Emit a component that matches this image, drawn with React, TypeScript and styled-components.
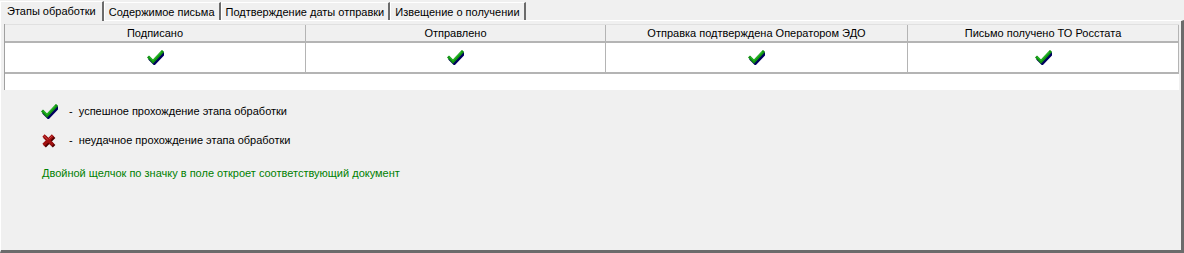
import React from "react";
import styled, { createGlobalStyle } from "styled-components";

const GlobalStyle = createGlobalStyle`
  html, body { margin: 0; padding: 0; background: #f0f0f0; }
  body { font-family: "Liberation Sans", Arial, sans-serif; font-size: 11px; color: #000; }
  * { box-sizing: border-box; }
`;

const Window = styled.div`
  width: 1184px;
  height: 253px;
  display: flex;
  flex-direction: column;
  background: #f0f0f0;
`;

const TabStrip = styled.div`
  display: flex;
  align-items: flex-end;
  height: 20px;
`;

const Tab = styled.div<{ $active?: boolean }>`
  height: ${(p) => (p.$active ? "20px" : "18px")};
  padding: ${(p) => (p.$active ? "2px 6px 0 6px" : "2px 4px 0 4px")};
  border-left: 1px solid #ffffff;
  border-top: 1px solid #ffffff;
  border-right: 2px solid #6b6b6b;
  background: #f0f0f0;
  white-space: nowrap;
  line-height: 14px;
  position: relative;
  z-index: ${(p) => (p.$active ? 2 : 1)};
  margin-bottom: ${(p) => (p.$active ? "-1px" : "0")};
`;

const Panel = styled.div`
  flex: 1;
  border-top: 1px solid #ffffff;
  border-left: 1px solid #ffffff;
  border-right: 3px solid #6b6b6b;
  border-bottom: 3px solid #6b6b6b;
  padding: 3px 0 0 3px;
  display: flex;
  flex-direction: column;
`;

const Grid = styled.div`
  width: 1175px;
  background: #ffffff;
  border-left: 1px solid #a0a0a0;
  display: flex;
  flex-direction: column;
`;

const Row = styled.div<{ $h: number; $header?: boolean }>`
  display: grid;
  grid-template-columns: 301px 300px 302px 1fr;
  height: ${(p) => p.$h}px;
  background: ${(p) => (p.$header ? "#f0f0f0" : "#ffffff")};
  border-bottom: 2px solid #b4b4b4;
  border-top: ${(p) => (p.$header ? "1px solid #e0e0e0" : "0")};
`;

const Cell = styled.div`
  display: flex;
  align-items: center;
  justify-content: center;
  border-right: 1px solid #b4b4b4;
  line-height: 14px;
`;

const EmptyRow = styled.div`
  height: 16px;
  background: #ffffff;
`;

const Legend = styled.div`
  display: flex;
  flex-direction: column;
  padding: 11px 0 0 36px;
`;

const LegendItem = styled.div`
  display: flex;
  align-items: center;
  height: 20px;
  margin-bottom: 9px;
`;

const IconSlot = styled.div`
  width: 29px;
  padding-left: 1px;
  display: flex;
  justify-content: flex-start;
`;

const Hint = styled.div`
  color: #008000;
  padding-left: 2px;
  margin-top: 8px;
`;

const Check = () => (
  <svg width="17" height="15" viewBox="0 0 17 15">
    <path d="M2.5 8.5 L6.5 12.5 L15.5 3" fill="none" stroke="#000060" strokeWidth="3" strokeLinecap="square" transform="translate(0.8,1)" />
    <path d="M2 7.5 L6 11.5 L15 2" fill="none" stroke="#109010" strokeWidth="3" strokeLinecap="square" />
    <path d="M2.5 7 L6 10.5 L14.5 1.8" fill="none" stroke="#30d030" strokeWidth="1" />
  </svg>
);

const Cross = () => (
  <svg width="15" height="15" viewBox="0 0 15 15">
    <path d="M3 3 L12.5 12.5 M12.5 3 L3 12.5" fill="none" stroke="#500000" strokeWidth="3.6" transform="translate(0.6,0.8)" />
    <path d="M2.5 2.5 L12 12 M12 2.5 L2.5 12" fill="none" stroke="#a01010" strokeWidth="3.2" />
    <path d="M3 2.8 L7 6.8 M11.5 2.6 L8 6" fill="none" stroke="#d04848" strokeWidth="0.9" />
  </svg>
);

const columns = [
  "Подписано",
  "Отправлено",
  "Отправка подтверждена Оператором ЭДО",
  "Письмо получено ТО Росстата",
];

const tabs = [
  "Этапы обработки",
  "Содержимое письма",
  "Подтверждение даты отправки",
  "Извещение о получении",
];

export default function App() {
  return (
    <>
      <GlobalStyle />
      <Window>
        <TabStrip>
          {tabs.map((t, i) => (
            <Tab key={t} $active={i === 0}>
              {t}
            </Tab>
          ))}
        </TabStrip>
        <Panel>
          <Grid>
            <Row $h={19} $header>
              {columns.map((c) => (
                <Cell key={c}>{c}</Cell>
              ))}
            </Row>
            <Row $h={31}>
              {columns.map((c) => (
                <Cell key={c}>
                  <Check />
                </Cell>
              ))}
            </Row>
            <EmptyRow />
          </Grid>
          <Legend>
            <LegendItem>
              <IconSlot>
                <Check />
              </IconSlot>
              <span>-&nbsp; успешное прохождение этапа обработки</span>
            </LegendItem>
            <LegendItem>
              <IconSlot>
                <Cross />
              </IconSlot>
              <span>-&nbsp; неудачное прохождение этапа обработки</span>
            </LegendItem>
            <Hint>Двойной щелчок по значку в поле откроет соответствующий документ</Hint>
          </Legend>
        </Panel>
      </Window>
    </>
  );
}
